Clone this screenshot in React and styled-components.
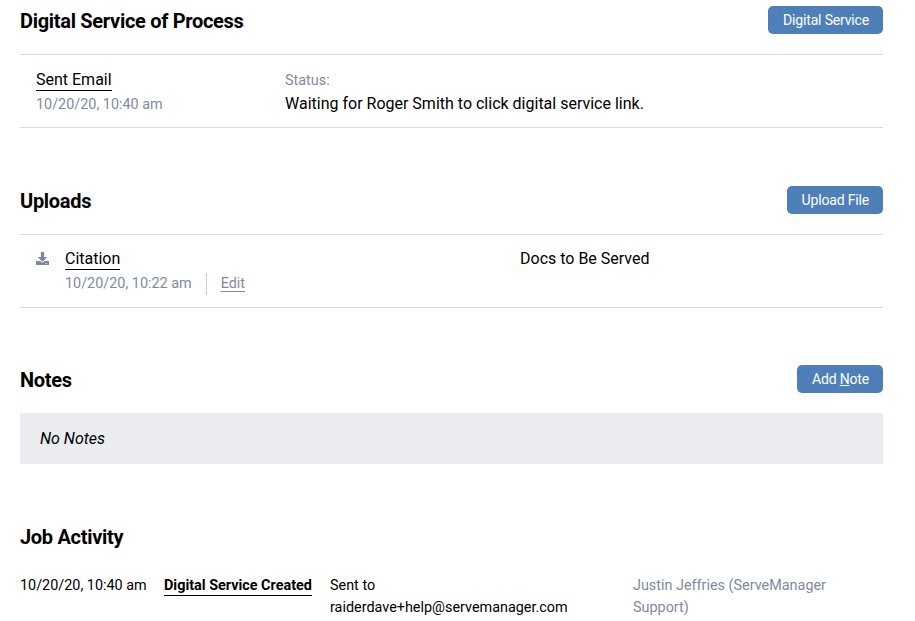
import React from 'react';
import styled, { createGlobalStyle } from 'styled-components';
import { FaDownload } from 'react-icons/fa';

const GlobalStyle = createGlobalStyle`
  html, body {
    margin: 0;
    padding: 0;
    background: #fff;
    overflow: hidden;
  }
  body {
    font-family: Roboto, 'Liberation Sans', sans-serif;
    color: #000;
  }
`;

export default function App() {
  return (
    <Page>
      <GlobalStyle />
      <Section>
        <Header>
          <Title>Digital Service of Process</Title>
          <ActionButton>Digital Service</ActionButton>
        </Header>
        <ServiceRow>
          <ServiceEvent>
            <Link>Sent Email</Link>
            <Muted>10/20/20, 10:40 am</Muted>
          </ServiceEvent>
          <div>
            <StatusLabel>Status:</StatusLabel>
            <StatusText>Waiting for Roger Smith to click digital service link.</StatusText>
          </div>
        </ServiceRow>
      </Section>

      <Section>
        <Header>
          <Title>Uploads</Title>
          <ActionButton>Upload File</ActionButton>
        </Header>
        <UploadRow>
          <IconCell><FaDownload size={13} /></IconCell>
          <UploadInfo>
            <Link>Citation</Link>
            <UploadMeta>
              <Muted>10/20/20, 10:22 am</Muted>
              <EditLink>Edit</EditLink>
            </UploadMeta>
          </UploadInfo>
          <UploadType>Docs to Be Served</UploadType>
        </UploadRow>
      </Section>

      <Section>
        <Header $flush>
          <Title>Notes</Title>
          <ActionButton>Add <u>N</u>ote</ActionButton>
        </Header>
        <EmptyNotes>No Notes</EmptyNotes>
      </Section>

      <Section>
        <ActivityTitle>Job Activity</ActivityTitle>
        <ActivityRow>
          <span>10/20/20, 10:40 am</span>
          <div><ActivityName>Digital Service Created</ActivityName></div>
          <ActivityDetail>Sent to raiderdave+help@servemanager.com</ActivityDetail>
          <ActivityUser>Justin Jeffries (ServeManager Support)</ActivityUser>
        </ActivityRow>
      </Section>
    </Page>
  );
}

const Page = styled.div`
  width: 863px;
  height: 621px;
  padding: 6px 32px 0 20px;
  overflow: hidden;
  display: flex;
  flex-direction: column;
  gap: 57.5px;
`;

const Section = styled.section`
  display: flex;
  flex-direction: column;
`;

const Header = styled.div`
  display: flex;
  justify-content: space-between;
  align-items: flex-start;
  height: 48px;
  border-bottom: ${(props) => (props.$flush ? 'none' : '1px solid #dcdcdc')};
`;

const Title = styled.h2`
  margin: 0;
  font-size: 20px;
  line-height: 30px;
  font-weight: 700;
  letter-spacing: -0.3px;
`;

const ActionButton = styled.button`
  height: 28px;
  padding: 0 14px 0 15px;
  border: none;
  border-radius: 5px;
  background: #4e7fb8;
  color: #fff;
  font-family: inherit;
  font-size: 14px;
  letter-spacing: -0.17px;
`;

const ServiceRow = styled.div`
  display: grid;
  grid-template-columns: 249px 1fr;
  height: 73px;
  padding: 15px 16px 0;
  box-sizing: border-box;
  border-bottom: 1px solid #dcdcdc;
`;

const ServiceEvent = styled.div`
  display: flex;
  flex-direction: column;
  align-items: flex-start;
`;

const Link = styled.span`
  font-size: 16px;
  line-height: 20px;
  border-bottom: 1px solid #000;
  margin-bottom: 3px;
`;

const Muted = styled.span`
  font-size: 14.4px;
  line-height: 22px;
  color: #7f8a9f;
`;

const StatusLabel = styled.div`
  font-size: 14.4px;
  line-height: 20px;
  margin-top: 1px;
  color: #7f8a9f;
`;

const StatusText = styled.div`
  font-size: 16px;
  line-height: 26px;
`;

const UploadRow = styled.div`
  display: grid;
  grid-template-columns: 29px 455px 1fr;
  height: 73px;
  padding: 14px 16px 0;
  box-sizing: border-box;
  border-bottom: 1px solid #dcdcdc;
`;

const IconCell = styled.div`
  padding-top: 3px;
  color: #7b86a0;
  line-height: 0;
`;

const UploadInfo = styled.div`
  display: flex;
  flex-direction: column;
  align-items: flex-start;
`;

const UploadMeta = styled.div`
  display: flex;
  align-items: center;
  height: 22px;
`;

const EditLink = styled.span`
  margin-left: 14px;
  padding-left: 14px;
  border-left: 1px solid #ccc;
  font-size: 14.4px;
  line-height: 22px;
  color: #7f8a9f;
  text-decoration: underline;
  text-underline-offset: 3px;
`;

const UploadType = styled.div`
  font-size: 16px;
  line-height: 20px;
`;

const EmptyNotes = styled.div`
  background: #ebecef;
  height: 51px;
  line-height: 51px;
  padding-left: 20px;
  font-size: 16px;
  font-style: italic;
`;

const ActivityTitle = styled(Title)`
  padding-bottom: 23px;
`;

const ActivityRow = styled.div`
  display: grid;
  grid-template-columns: 144px 166px 303px 1fr;
  font-size: 14.4px;
  line-height: 22px;
`;

const ActivityDetail = styled.span`
  padding-right: 40px;
`;

const ActivityName = styled.span`
  font-weight: 700;
  border-bottom: 1px solid #000;
  padding-bottom: 1px;
`;

const ActivityUser = styled.span`
  color: #7f8a9f;
`;
